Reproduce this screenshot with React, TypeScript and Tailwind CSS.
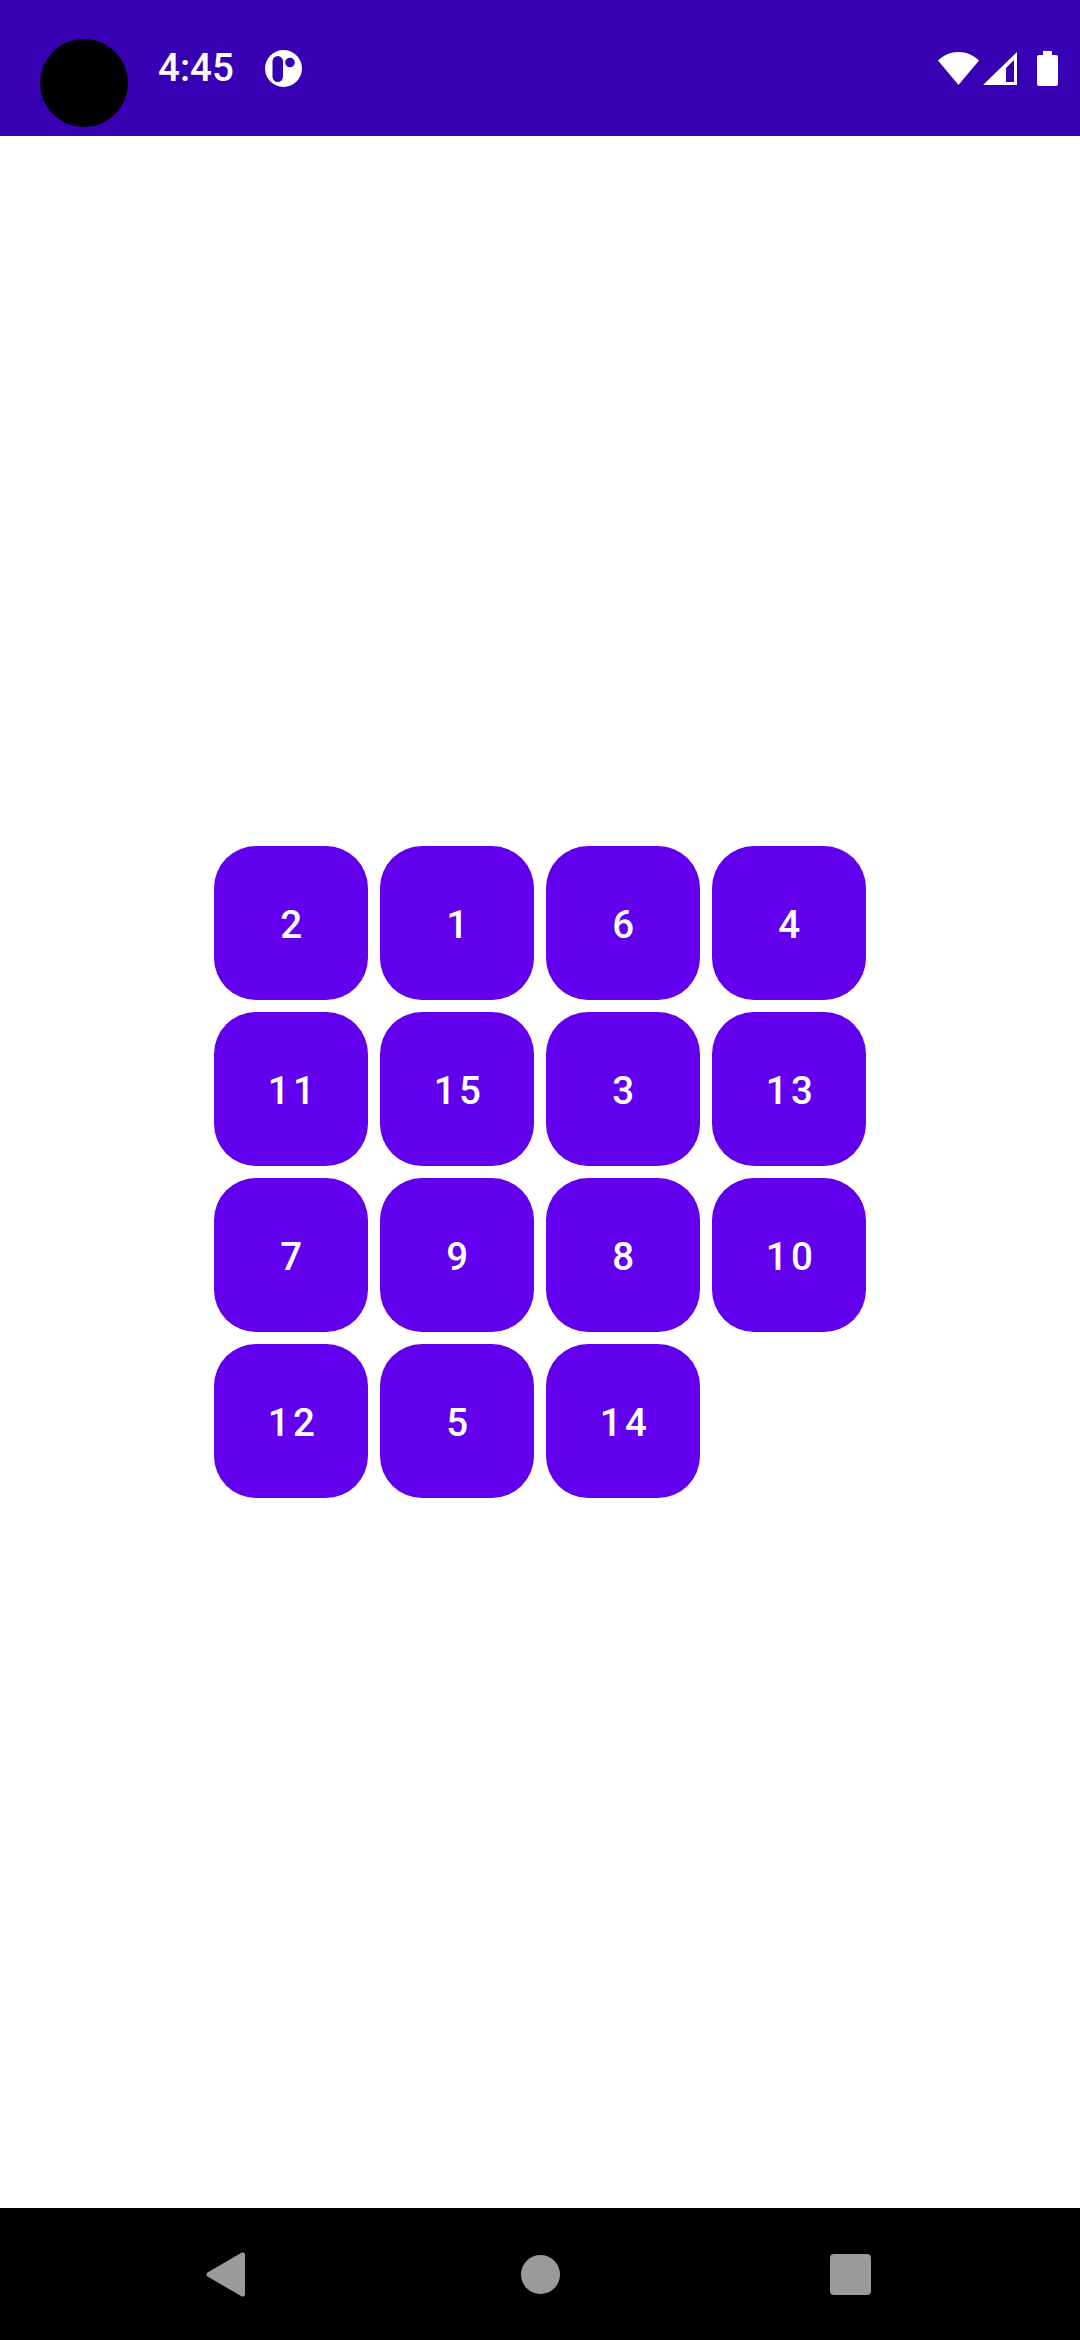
const tiles = [2, 1, 6, 4, 11, 15, 3, 13, 7, 9, 8, 10, 12, 5, 14];

function AppBadge() {
  return (
    <svg width="37" height="37" viewBox="0 0 37 37">
      <circle cx="18.5" cy="18.5" r="18.5" fill="#fff" />
      <rect x="7.500" y="6" width="10.500" height="26" rx="5.250" fill="#3700B3" />
      <circle cx="25" cy="12.500" r="4.800" fill="#3700B3" />
    </svg>
  );
}

function WifiIcon() {
  return (
    <svg width="41" height="33" viewBox="0 0 41 33">
      <path d="M0 8.6C5.4 3.2 12.6 0 20.5 0S35.600 3.200 41 8.600L20.500 33Z" fill="#fff" />
    </svg>
  );
}

function SignalIcon() {
  return (
    <svg width="34" height="33" viewBox="0 0 34 33">
      <path fillRule="evenodd" d="M0 33L34 0V33ZM23 16V30H31V8Z" fill="#fff" />
    </svg>
  );
}

function BatteryIcon() {
  return (
    <svg width="21" height="35" viewBox="0 0 21 35">
      <path d="M6 0H15V4H19A2 2 0 0 1 21 6V33A2 2 0 0 1 19 35H2A2 2 0 0 1 0 33V6A2 2 0 0 1 2 4H6Z" fill="#fff" />
    </svg>
  );
}

export default function App() {
  return (
    <div className="flex h-[2340px] w-[1080px] flex-col bg-white font-['Roboto',sans-serif]">
      {/* Status bar */}
      <div className="flex h-[136px] shrink-0 items-center bg-[#3700B3] pl-10 pr-[22px] text-white">
        <div className="mt-[30px] h-[88px] w-[88px] rounded-full bg-black" />
        <span className="ml-[30px] text-[38.5px] leading-none font-medium">4:45</span>
        <div className="ml-[31px] flex">
          <AppBadge />
        </div>
        <div className="ml-auto flex items-center">
          <WifiIcon />
          <div className="ml-1">
            <SignalIcon />
          </div>
          <div className="ml-5">
            <BatteryIcon />
          </div>
        </div>
      </div>

      {/* Puzzle */}
      <div className="flex flex-1 items-center justify-center">
        <div className="grid grid-cols-[repeat(4,154px)] grid-rows-[repeat(4,154px)] gap-3">
          {tiles.map((n) => (
            <button
              key={n}
              className="flex items-center justify-center rounded-[42px] bg-[#6200EE] pl-[4px] pt-[4px] text-[38.5px] font-medium tracking-[3.44px] text-white"
            >
              {n}
            </button>
          ))}
        </div>
      </div>

      {/* Nav bar */}
      <div className="flex h-[132px] shrink-0 items-center bg-black pt-[1px]">
        <div className="ml-[206px] flex">
          <svg width="39" height="45" viewBox="0 0 39 45">
            <path d="M35 1A2.500 2.500 0 0 1 39 3.500V41.500A2.500 2.500 0 0 1 35 44L1.500 24.500A2.500 2.500 0 0 1 1.500 20.500Z" fill="#9A9A9A" />
          </svg>
        </div>
        <div className="ml-[276px] h-[39px] w-[39px] rounded-full bg-[#9A9A9A]" />
        <div className="ml-[270px] h-[41px] w-[41px] rounded-[4px] bg-[#9A9A9A]" />
      </div>
    </div>
  );
}
